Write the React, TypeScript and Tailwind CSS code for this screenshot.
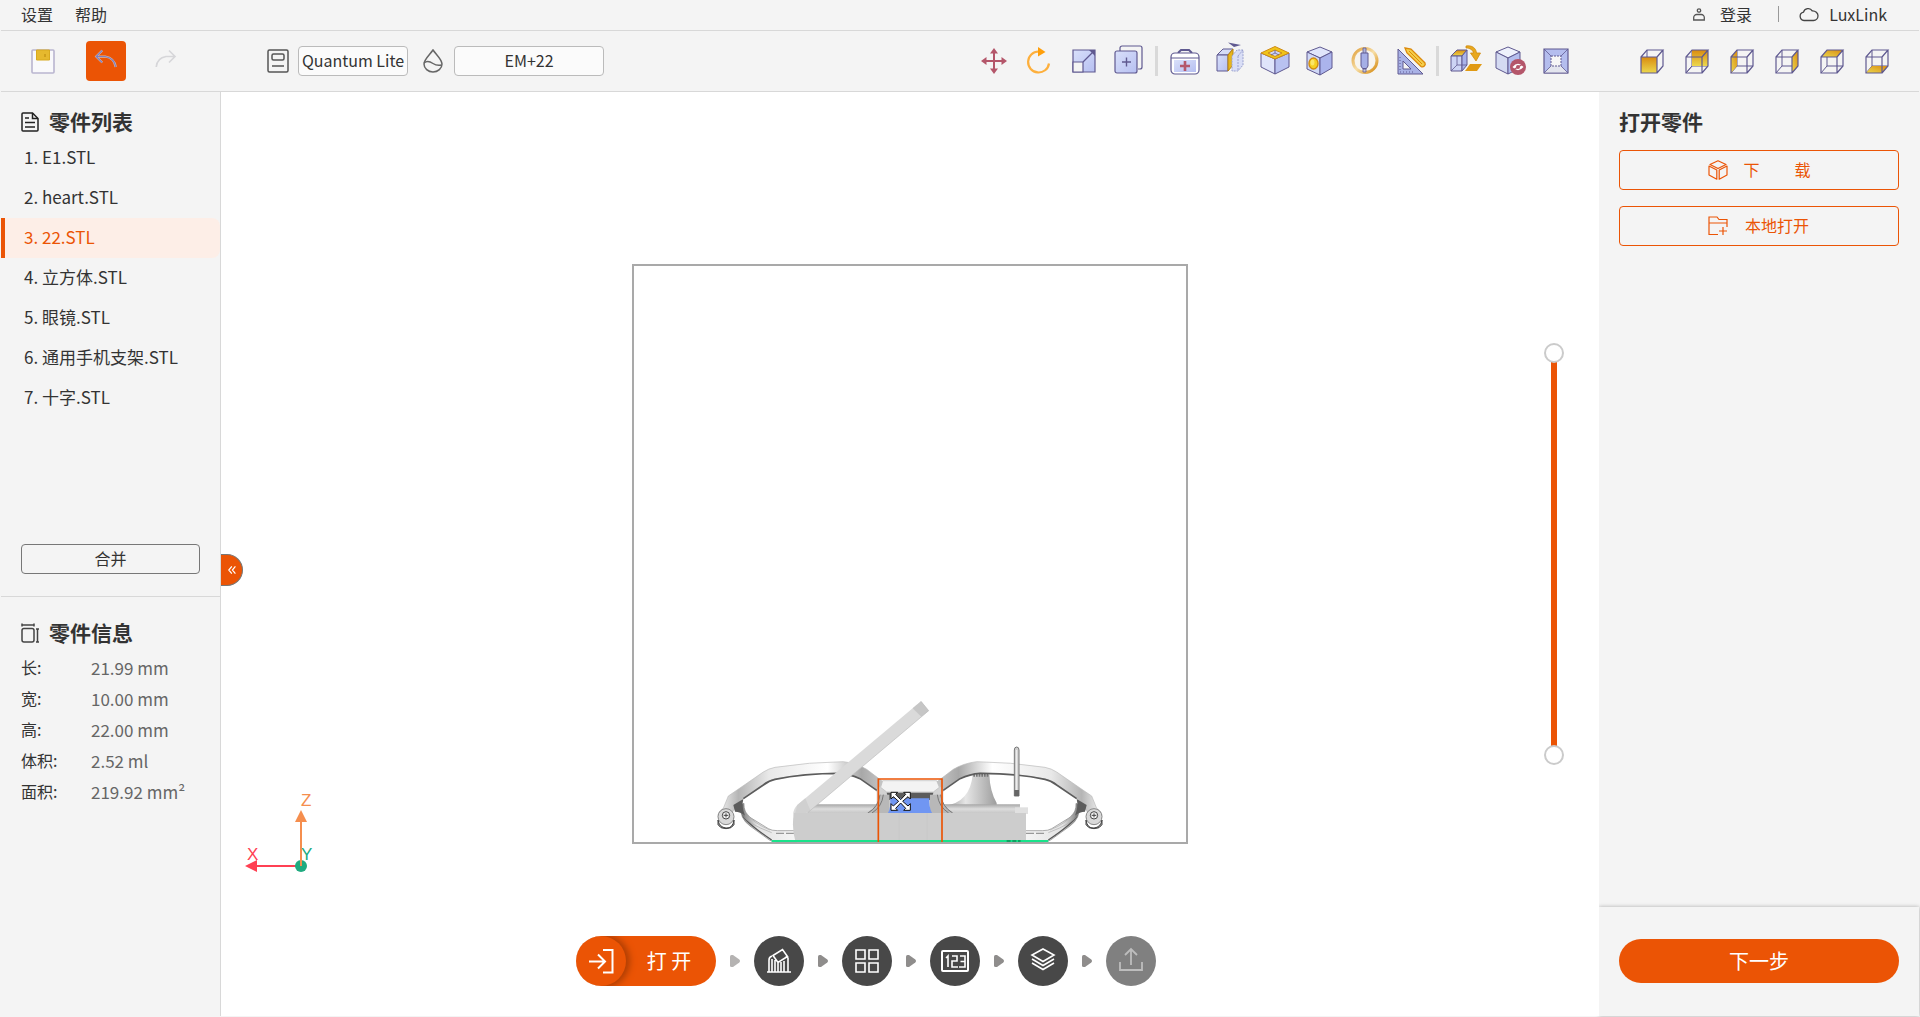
import { useState } from "react";
import type { ReactNode } from "react";

const LINE = "#5f5990";
const FACE = "#b9c2f1";

function Svg({ children, className = "size-8 overflow-visible" }: { children: ReactNode; className?: string }) {
  return (
    <svg viewBox="0 0 32 32" className={className} fill="none" aria-hidden="true">
      {children}
    </svg>
  );
}

function Gradients() {
  return (
    <svg className="absolute size-0" aria-hidden="true">
      <defs>
        <linearGradient id="face" x1="0" y1="0" x2="1" y2="1">
          <stop offset="0" stopColor="#d9e0fa" />
          <stop offset="1" stopColor="#b6bff1" />
        </linearGradient>
        <linearGradient id="gold" x1="0" y1="0" x2="0" y2="1">
          <stop offset="0" stopColor="#d98b10" />
          <stop offset="1" stopColor="#ecd84e" />
        </linearGradient>
        <linearGradient id="goldSide" x1="1" y1="0" x2="0" y2="1">
          <stop offset="0" stopColor="#d98b10" />
          <stop offset="1" stopColor="#ecd84e" />
        </linearGradient>
        <linearGradient id="ring" x1="0" y1="0" x2="1" y2="1">
          <stop offset="0" stopColor="#e0a03c" />
          <stop offset="0.5" stopColor="#f7dfa8" />
          <stop offset="1" stopColor="#d48608" />
        </linearGradient>
      </defs>
    </svg>
  );
}

const MoveIcon = () => (
  <Svg>
    <path d="M7 16h18M16 7v18" stroke="#b4566a" strokeWidth="2" />
    <path d="M16 3l4 5.500h-8zM16 29l4-5.500h-8zM3 16l5.500-4v8zM29 16l-5.500-4v8z" fill="#b4566a" />
  </Svg>
);

const RotateIcon = () => (
  <Svg>
    <path d="M15.500 6.500A10.500 10.500 0 1 0 26 18.500" stroke="#fdaf3c" strokeWidth="2.200" />
    <path d="M15 2l7.500 5-7.500 4.500z" fill="#ff9f0a" />
  </Svg>
);

const ScaleIcon = () => (
  <Svg>
    <path d="M5 5h22v22H5z" fill="url(#face)" stroke={LINE} strokeWidth="1.200" />
    <path d="M5 17h10v10H5z" fill="#f4f4f4" stroke={LINE} strokeWidth="1.200" />
    <path d="M15 17L26 6" stroke={LINE} strokeWidth="1.200" />
    <path d="M21 5h6v6z" fill={LINE} />
  </Svg>
);

const CloneIcon = () => (
  <Svg>
    <path d="M7 6V3a2 2 0 0 1 2-2h18a2 2 0 0 1 2 2v19a2 2 0 0 1-2 2h-2" stroke={LINE} strokeWidth="1.200" />
    <rect x="2" y="6" width="22" height="22" rx="2" fill="url(#face)" stroke={LINE} strokeWidth="1.200" />
    <path d="M9 17h9M13.500 12.500v9" stroke={LINE} strokeWidth="1.400" />
  </Svg>
);

const RepairIcon = () => (
  <Svg>
    <path d="M9 8l3-3h8l3 3" stroke={LINE} strokeWidth="2" />
    <rect x="2" y="8" width="28" height="21" rx="4" fill="#fff" stroke={LINE} strokeWidth="1.200" />
    <path d="M5 15h22v12H5z" fill="url(#face)" />
    <path d="M2 13h28" stroke={LINE} />
    <path d="M16 16v10M11 21h10" stroke="#b4566a" strokeWidth="2.600" />
  </Svg>
);

const CutIcon = () => (
  <Svg>
    <path d="M3 10l6-6h10l-5 6z" fill="#d5dcf8" stroke={LINE} />
    <path d="M3 10h11v16H3z" fill="url(#face)" stroke={LINE} />
    <path d="M14 10l5-6v16l-5 6z" fill="#e6b51c" stroke="#b98310" />
    <path d="M18 11l5-6h6v15l-5 6h-6z" fill="#d9def6" stroke="#9aa1cf" strokeDasharray="2 1" />
    <path d="M24 11v15M24 11l5-6" stroke="#9aa1cf" strokeDasharray="2 1" />
    <path d="M14-2.500l13 2.500-7 2z" fill={LINE} />
  </Svg>
);

const HollowIcon = () => (
  <Svg>
    <path d="M2 8l14 6v15L2 22z" fill="#dfe4fa" stroke={LINE} />
    <path d="M30 8l-14 6v15l14-7z" fill={FACE} stroke={LINE} />
    <path d="M16 1.500l14 6.500-14 6L2 8z" fill="#f0c419" stroke="#cf8b14" />
    <path d="M16 5l7 3-7 3.500L9 8z" fill="#cfd5f5" stroke="#cf8b14" />
    <path d="M16 5v3l-4 2M16 8l4 2" stroke={LINE} strokeWidth="0.800" />
  </Svg>
);

const PunchIcon = () => (
  <Svg>
    <path d="M3 7l13-5 12 5-12 6z" fill="#e0e5fb" stroke={LINE} />
    <path d="M3 7l13 6v17L3 24z" fill="#d0d8f6" stroke={LINE} />
    <path d="M28 7l-12 6v17l12-7z" fill="#abb4ec" stroke={LINE} />
    <ellipse cx="9.500" cy="18.500" rx="4.500" ry="5.500" fill="#f6cf22" stroke="#d18c12" strokeWidth="1.400" />
    <ellipse cx="8.500" cy="17.500" rx="2" ry="3" fill="#fbe667" />
  </Svg>
);

const SupportIcon = () => (
  <Svg>
    <circle cx="16" cy="15.500" r="12" stroke="url(#ring)" strokeWidth="3" fill="#f7f5f0" />
    <path d="M14 3h3v6h-3z" fill="#aeb4d8" stroke={LINE} strokeWidth="0.800" />
    <path d="M12 8h7v13l-1.500 2.500h-4L12 21z" fill="#a5afe6" stroke={LINE} />
    <path d="M14 24h3v3h-3z" fill="#c9cddf" stroke={LINE} strokeWidth="0.800" />
  </Svg>
);

const MeasureIcon = () => (
  <Svg>
    <path d="M4 4v25h25z" fill="#a9b2e6" stroke={LINE} />
    <path d="M9 16v8h8z" fill="#f4f4f4" stroke={LINE} />
    <path d="M6 12v15h15" stroke={LINE} strokeDasharray="1 2" />
    <path d="M11 3l6 1 14 14c1 2-1.500 5-4 3.500L13 8z" fill="#f4cf4b" stroke="#dc8a0c" strokeWidth="1.300" />
    <path d="M15 6l13 13" stroke="#dc8a0c" />
  </Svg>
);

const LayFlatIcon = () => (
  <Svg>
    <path d="M1 11l6-6h10l-5 6z" fill="url(#gold)" stroke={LINE} />
    <path d="M1 11h11v15H1z" fill="#cdd4f5" stroke={LINE} />
    <path d="M12 11l5-6v15l-5 6z" fill="#a9b3ea" stroke={LINE} />
    <path d="M7 11v9h10M7 20l-6 6" stroke={LINE} strokeWidth="0.800" />
    <path d="M16 1c6-1 10 2 10.500 7h4L26 16l-5.500-8h3C23 5 20 3 16 3z" fill="#e8a81e" stroke="#d08a0c" strokeWidth="0.800" />
    <path d="M20 19h12l-5 7H15z" fill="#e09a14" />
  </Svg>
);

const HideIcon = () => (
  <Svg>
    <path d="M1 7l12-5 12 5-12 6z" fill="#eef1fc" stroke={LINE} />
    <path d="M1 7l12 6v16L1 23z" fill="#d4daf2" stroke={LINE} />
    <path d="M25 7l-12 6v16l12-6z" fill="#b4bdee" stroke={LINE} />
    <circle cx="23" cy="22" r="8" fill="#b4566a" />
    <path d="M17.500 22q5.500-6.500 11 0q-5.500 6.500-11 0z" fill="#fff" />
    <circle cx="23" cy="22" r="2" fill="#b4566a" />
    <path d="M18 25l10-6" stroke="#b4566a" strokeWidth="1.400" />
  </Svg>
);

const FrameIcon = () => (
  <Svg>
    <path d="M4 4h24v24H4z" fill="#b4bdee" stroke={LINE} strokeWidth="1.200" />
    <path d="M4 28l7-7h10l7 7z" fill="#e3e5ee" />
    <path d="M11 11h10v10H11z" fill="#f6f6f6" stroke={LINE} strokeDasharray="2 1" />
    <path d="M4 4l7 7M28 4l-7 7M4 28l7-7M28 28l-7-7M4 28h24" stroke={LINE} strokeWidth="0.800" />
  </Svg>
);

const UndoIcon = () => (
  <Svg className="size-6">
    <path d="M11 2L3 10l8 8M3 10h12q12 2 14 14" stroke="#d8b9a8" strokeWidth="3" />
    <path d="M11 2L3 10l8 8M3 10h12q12 2 14 14" stroke="#7f7fc0" strokeWidth="1.600" />
  </Svg>
);

const RedoIcon = () => (
  <Svg className="size-6">
    <path d="M20 2l8 8-8 8M28 10H16Q4 12 3 24" stroke="#d6d6d9" strokeWidth="2.200" />
  </Svg>
);

const SaveIcon = () => (
  <Svg>
    <rect x="5" y="5" width="22" height="23" rx="1" fill="#f9f9fb" stroke="#b9b5cf" strokeWidth="1.600" />
    <path d="M9.500 5h13v10h-13z" fill="#e6b92e" stroke="#d8a91e" />
    <path d="M18 9v3" stroke="#b9860b" />
  </Svg>
);

const cubeFaces: Record<string, { name: string; d: string }> = {
  front: { name: "前视图", d: "M5 12h16v16H5z" },
  back: { name: "后视图", d: "M11 5h16v16H11z" },
  left: { name: "左视图", d: "M5 12l6-7v16l-6 7z" },
  right: { name: "右视图", d: "M21 12l6-7v16l-6 7z" },
  top: { name: "俯视图", d: "M5 12l6-7h16l-6 7z" },
  bottom: { name: "仰视图", d: "M5 28l6-7h16l-6 7z" },
};

function CubeIcon({ face }: { face: string }) {
  return (
    <Svg>
      {face !== "front" && <path d="M11 5v16h16M11 21l-6 7" stroke={LINE} />}
      {face === "front" && <path d="M11 5v7" stroke={LINE} />}
      <path d={cubeFaces[face].d} fill={face === "front" || face === "back" ? "url(#gold)" : "url(#goldSide)"} />
      {face === "back" && <path d="M5 28l6-7" stroke={LINE} />}
      <path d="M5 12h16v16H5zM5 12l6-7h16l-6 7M27 5v16l-6 7" stroke={LINE} strokeWidth="1.200" />
    </Svg>
  );
}

function ToolButton({ name, children }: { name: string; children: ReactNode }) {
  return (
    <button type="button" aria-label={name} className="flex h-10 w-[45px] items-center justify-center">
      {children}
    </button>
  );
}

const Divider = () => <span className="mx-1 h-[30px] w-[3px] bg-[#d9d9d9]" />;

function MenuBar() {
  return (
    <header className="flex h-[31px] items-center justify-between border-b border-[#d8d8d8] px-5 pb-0.5">
      <nav className="flex gap-[22px]">
        <button type="button">设置</button>
        <button type="button">帮助</button>
      </nav>
      <div className="flex items-center pr-3">
        <button type="button" className="flex items-center gap-[15px]">
          <svg viewBox="0 0 12 13" className="h-[13px] w-3" fill="none" stroke="#555" strokeWidth="1.300" aria-hidden="true">
            <circle cx="6" cy="2.500" r="1.700" />
            <path d="M.700 12V9.500a3 3 0 0 1 3-3h4.600a3 3 0 0 1 3 3V12z" />
          </svg>
          登录
        </button>
        <span className="mr-5 ml-[26px] h-4 w-px bg-[#999]" />
        <button type="button" className="flex items-center gap-2.5">
          <svg viewBox="0 0 20 15" className="h-[15px] w-5" fill="none" stroke="#444" strokeWidth="1.300" aria-hidden="true">
            <path d="M5 13.500a4.200 4.200 0 0 1-.5-8.300C5.500 1.500 11 .0 13.200 3.800c3.300-.2 5.800 2.200 5.800 5 0 2.600-2 4.700-4.500 4.700z" />
          </svg>
          LuxLink
        </button>
      </div>
    </header>
  );
}

function Toolbar() {
  return (
    <div className="flex h-[61px] items-center justify-between border-b border-[#d8d8d8] pr-5 pl-[26px]">
      <div className="flex items-center">
        <button type="button" aria-label="保存"><SaveIcon /></button>
        <button type="button" aria-label="撤销" className="ml-[27px] flex size-10 items-center justify-center rounded bg-[#eb5405]">
          <UndoIcon />
        </button>
        <button type="button" aria-label="重做" className="ml-7 flex size-6 items-center justify-center"><RedoIcon /></button>
        <div className="ml-[89px] flex items-center">
          <svg viewBox="0 0 22 24" className="h-6 w-[22px]" fill="none" stroke="#555" strokeWidth="1.500" aria-hidden="true">
            <rect x="1" y="1" width="20" height="22" rx="1.500" />
            <rect x="5" y="5" width="12" height="6" rx="1.500" />
            <path d="M5 17h12" />
          </svg>
          <select aria-label="打印机" className="ml-[9px] h-[30px] w-[110px] appearance-none rounded border border-[#bbb] bg-[#fbfbfb] pb-0.5 text-center text-base">
            <option>Quantum Lite</option>
          </select>
          <svg viewBox="0 0 20 24" className="ml-[15px] h-6 w-5" fill="none" stroke="#666" strokeWidth="1.500" aria-hidden="true">
            <path d="M10 1C6.500 6 1 10.500 1 15a9 8 0 0 0 18 0C19 10.500 13.500 6 10 1z" />
            <path d="M1 14c3-2.500 6-1.500 9 .5s6 2 8.500 1.500" />
          </svg>
          <select aria-label="材料" className="ml-[11px] h-[30px] w-[150px] appearance-none rounded border border-[#bbb] bg-[#fbfbfb] pb-0.5 text-center text-base">
            <option>EM+22</option>
          </select>
        </div>
      </div>
      <div className="flex items-center">
        <ToolButton name="移动"><MoveIcon /></ToolButton>
        <ToolButton name="旋转"><RotateIcon /></ToolButton>
        <ToolButton name="缩放"><ScaleIcon /></ToolButton>
        <ToolButton name="克隆"><CloneIcon /></ToolButton>
        <Divider />
        <ToolButton name="修复"><RepairIcon /></ToolButton>
        <ToolButton name="切割"><CutIcon /></ToolButton>
        <ToolButton name="抽壳"><HollowIcon /></ToolButton>
        <ToolButton name="打孔"><PunchIcon /></ToolButton>
        <ToolButton name="支撑"><SupportIcon /></ToolButton>
        <ToolButton name="测量"><MeasureIcon /></ToolButton>
        <Divider />
        <ToolButton name="放平"><LayFlatIcon /></ToolButton>
        <ToolButton name="隐藏"><HideIcon /></ToolButton>
        <ToolButton name="视角"><FrameIcon /></ToolButton>
        <div className="ml-[51px] flex">
          {Object.keys(cubeFaces).map((face) => (
            <ToolButton key={face} name={cubeFaces[face].name}><CubeIcon face={face} /></ToolButton>
          ))}
        </div>
      </div>
    </div>
  );
}

const parts = ["E1.STL", "heart.STL", "22.STL", "立方体.STL", "眼镜.STL", "通用手机支架.STL", "十字.STL"];

const info: [string, ReactNode][] = [
  ["长:", "21.99 mm"],
  ["宽:", "10.00 mm"],
  ["高:", "22.00 mm"],
  ["体积:", "2.52 ml"],
  ["面积:", "219.92 mm²"],
];

function PartsPanel() {
  const [selected, setSelected] = useState(2);
  return (
    <aside className="flex w-[220px] shrink-0 flex-col border-r border-[#d8d8d8] bg-[#f4f4f4]">
      <h2 className="flex h-[46px] items-center gap-2.5 px-5 pt-3.5 text-[21px] font-bold">
        <svg viewBox="0 0 18 20" className="h-5 w-[18px]" fill="none" stroke="#222" strokeWidth="1.500" aria-hidden="true">
          <path d="M2 1h9.500L17 6.500V18a1 1 0 0 1-1 1H2a1 1 0 0 1-1-1V2a1 1 0 0 1 1-1z" />
          <path d="M11.500 1v5.500H17M4 6h4M4 10.500h10M4 15h10" />
        </svg>
        零件列表
      </h2>
      <ol className="h-[406px] text-[17px]">
        {parts.map((part, i) => (
          <li key={part}>
            <button
              type="button"
              onClick={() => setSelected(i)}
              className={
                i === selected
                  ? "flex h-10 w-full items-center rounded-r-lg border-l-4 border-[#eb5405] bg-[#fdeee7] pb-0.5 pl-[19px] text-[#eb5405]"
                  : "flex h-10 w-full items-center pb-0.5 pl-[23px]"
              }
            >
              {i + 1}. {part}
            </button>
          </li>
        ))}
      </ol>
      <button type="button" className="mx-5 h-[30px] rounded border border-[#777] pb-0.5 leading-none">合并</button>
      <section className="mt-[22px] border-t border-[#d8d8d8]">
        <h2 className="flex h-14 items-center gap-2.5 px-5 pt-4 text-[21px] font-bold">
          <svg viewBox="0 0 18 20" className="h-5 w-[18px]" fill="none" stroke="#444" strokeWidth="1.500" aria-hidden="true">
            <rect x="1" y="5.500" width="12" height="13.500" rx="2" />
            <path d="M1 2h12M1 .5v3M13 .5v3M16.500 6v13M15 6h3M15 19h3" />
          </svg>
          零件信息
        </h2>
        <dl className="-mt-px grid grid-cols-[70px_1fr] px-5 leading-[31px]">
          {info.map(([label, value]) => (
            <div key={label} className="contents">
              <dt>{label}</dt>
              <dd className="text-[17px] text-[#666]">{value}</dd>
            </div>
          ))}
        </dl>
      </section>
    </aside>
  );
}

function Eyewear() {
  return (
    <>
      <path d="M122 345Q118 385 150 408L208 450Q215 455 230 455H290V422H232Q215 422 205 416L150 382Q130 365 132 340z" fill="url(#metalEnd)" stroke="#888" strokeWidth="2" />
      <path d="M128 375Q140 400 215 450" stroke="#555" strokeWidth="4" fill="none" />
      <path d="M128 375Q140 400 215 428M140 370Q160 400 210 420" stroke="#aaa" strokeWidth="2" fill="none" />
      <path d="M228 430h55" stroke="#999" strokeWidth="4" strokeDasharray="24 6" />
      <path d="M85 318L190 246Q205 236 225 232Q330 216 430 215Q470 220 500 238L550 276L560 305L535 305L480 265Q450 252 420 249Q310 250 225 267Q205 272 190 284L130 325Q112 345 100 362Q90 385 65 398L55 380Q52 365 70 355Q78 335 85 318z" fill="url(#metal)" stroke="#b9b9b9" strokeWidth="2" />
      <path d="M540 308L480 266Q450 252 420 250Q310 250 225 268Q205 272 190 285L130 326" fill="none" stroke="#5c5c5c" strokeWidth="5" />
      <path d="M100 345l30-18q-6 22 5 50q-14-12-30-12z" fill="#5c5c5c" />
      <circle cx="78" cy="380" r="24" fill="#d9d9d9" stroke="#888" strokeWidth="3" />
      <path d="M54 390q4 22 24 24t24-24v14q-6 12-24 12t-24-12z" fill="#999" stroke="#444" strokeWidth="3" />
      <circle cx="78" cy="376" r="11" fill="#f3f3f3" stroke="#444" strokeWidth="3" />
      <path d="M71 376h14M78 370v12" stroke="#444" strokeWidth="3" />
    </>
  );
}

function Scene() {
  return (
    <svg viewBox="0 0 1260 495" className="absolute top-[424px] left-[66px] h-[165px] w-[420px]" role="img" aria-label="模型">
      <defs>
        <linearGradient id="metal" x1="0" x2="1">
          <stop offset="0" stopColor="#f5f5f5" />
          <stop offset="0.120" stopColor="#b5b5b5" />
          <stop offset="0.300" stopColor="#e8e8e8" />
          <stop offset="0.650" stopColor="#fff" />
          <stop offset="0.850" stopColor="#a8a8a8" />
          <stop offset="1" stopColor="#ccc" />
        </linearGradient>
        <linearGradient id="metalEnd" x1="0" x2="1">
          <stop offset="0" stopColor="#777" />
          <stop offset="0.300" stopColor="#e3e3e3" />
          <stop offset="1" stopColor="#f6f6f6" />
        </linearGradient>
        <linearGradient id="bar" x1="0" y1="0" x2="0" y2="1">
          <stop offset="0" stopColor="#a8a8a8" />
          <stop offset="0.500" stopColor="#ddd" />
          <stop offset="1" stopColor="#c4c4c4" />
        </linearGradient>
        <linearGradient id="horn" x1="0" x2="1">
          <stop offset="0" stopColor="#999" />
          <stop offset="0.400" stopColor="#e6e6e6" />
          <stop offset="1" stopColor="#9d9d9d" />
        </linearGradient>
      </defs>
      <path d="M818 254h50q2 50 22 85v8H735q75-10 83-93z" fill="url(#horn)" />
      <path d="M820 256h46" stroke="#777" strokeWidth="8" strokeDasharray="5 3" />
      <Eyewear />
      <g transform="matrix(-1 0 0 1 1260 0)">
        <Eyewear />
      </g>
      <path d="M340 343h620v28H320z" fill="url(#bar)" />
      <path d="M530 370V300l20-22h160l20 22v70z" fill="#d2d2d2" />
      <path d="M548 272h162l8 20-18 14H560l-18-14z" fill="#f3f3f3" stroke="#bbb" strokeWidth="2" />
      <path d="M560 308h140l-6 22H566z" fill="#5c5c5c" />
      <path d="M540 314h28v55h-68q36-20 40-55zM722 314h-32v55h70q-34-20-38-55z" fill="#b8b8b8" />
      <path d="M540 314q-4 36-36 55M550 314q-4 36-34 55M722 314q4 36 36 55M712 314q4 36 34 55" stroke="#777" strokeWidth="3" fill="none" />
      <path d="M564 369q10-20 6-44h118q-2 26 8 44z" fill="#7096f2" />
      <path d="M663 34L686 62L322 369L285 392Q272 365 292 345z" fill="#dadada" />
      <path d="M663 34l23 28-22 18-26-25z" fill="#c6c6c6" />
      <path d="M292 345l24-20 16 38-50 20z" fill="#d0d0d0" />
      <path d="M663 34L686 62L322 369" stroke="#bcbcbc" strokeWidth="2" fill="none" />
      <path d="M943 318V180q0-9 7-9t7 9v138z" fill="#cfcfcf" stroke="#777" strokeWidth="3" />
      <path d="M950 180v120" stroke="#f2f2f2" strokeWidth="3" />
      <path d="M943 300h14v18h-14z" fill="#666" />
      <path d="M945 352h39v20h-39z" fill="#e0e0e0" />
      <path d="M282 369H978v84H286q-12-42-4-84z" fill="#cdcdcd" />
      <path d="M598 369v84M682 369v84" stroke="#c9c9c9" strokeWidth="2" />
      <path d="M215 453H1045" stroke="#19e28a" strokeWidth="6" />
      <path d="M920 453h42" stroke="#0d8d55" strokeWidth="4" strokeDasharray="12 5" />
      <path d="M535 456V267H726V456" fill="none" stroke="#eb5405" strokeWidth="5" />
      <path
        d="M573 307h20l-6 6 15 16 15-16-6-6h20v20l-7-7-16 14 16 14 7-7v20h-20l6-6-15-16-15 16 6 6h-20v-20l7 7 16-14-16-14-7 7z"
        fill="#fff"
        stroke="#111"
        strokeWidth="3"
      />
    </svg>
  );
}

function LayerSlider() {
  const thumb =
    "pointer-events-none absolute inset-0 m-0 h-full w-5 appearance-none bg-transparent [writing-mode:vertical-lr] [direction:rtl] [&::-webkit-slider-thumb]:pointer-events-auto [&::-webkit-slider-thumb]:size-5 [&::-webkit-slider-thumb]:appearance-none [&::-webkit-slider-thumb]:rounded-full [&::-webkit-slider-thumb]:border-2 [&::-webkit-slider-thumb]:border-[#cbcbcb] [&::-webkit-slider-thumb]:bg-white";
  return (
    <div className="absolute top-1/2 right-[35px] flex h-[422px] w-5 -translate-y-1/2 justify-center py-2.5">
      <span className="w-1.5 bg-[#eb5405]" />
      <input type="range" aria-label="上限" defaultValue={100} className={thumb} />
      <input type="range" aria-label="下限" defaultValue={0} className={thumb} />
    </div>
  );
}

function Axes() {
  return (
    <svg viewBox="0 0 80 90" className="absolute bottom-[136px] left-5 h-[90px] w-20" fontFamily="Liberation Sans, sans-serif" fontSize="17" role="img" aria-label="坐标轴">
      <path d="M60 76H14" stroke="#ff4053" strokeWidth="2" />
      <path d="M4 76l12-6v12z" fill="#ff4053" />
      <circle cx="60" cy="76" r="6" fill="#20ab80" />
      <path d="M60 76V28" stroke="#f58e4e" strokeWidth="2" />
      <path d="M60 20l6 12H54z" fill="#f58e4e" />
      <text x="6" y="70" fill="#ff4053">X</text>
      <text x="60" y="70" fill="#20ab80">Y</text>
      <text x="60" y="16" fill="#f58e4e">Z</text>
    </svg>
  );
}

const StepArrow = ({ light }: { light?: boolean }) => (
  <svg viewBox="0 0 10 12" className="h-3 w-2.5" fill={light ? "#b5b3b2" : "#8f8d8c"} aria-hidden="true">
    <path d="M0 1.500Q0 0 1.500 0H3l6.300 4.600q1.400 1.400 0 2.800L3 12H1.500Q0 12 0 10.500z" />
  </svg>
);

const steps: { name: string; icon: ReactNode }[] = [
  { name: "支撑", icon: <path d="M2 25h24M4 25V13q0-3 3-4M7 25V12M10 25V13M13 25V15M16 25V15M19 25V14M23 25V11l-2-2M8 8.500L17.500 2.500l5 7-9.500 6z" /> },
  { name: "布局", icon: <path d="M3 3h9v9H3zM16 3h9v9h-9zM3 16h9v9H3zM16 16h9v9h-9z" /> },
  { name: "编号", icon: <><rect x="1" y="4" width="26" height="20" rx="1" strokeWidth="2" /><path d="M5 11l2-2v11M11 9h5v5h-5v6h6M19 9h5v11h-6M19.500 14.500H24" /></> },
  { name: "切片", icon: <path d="M14 2l11 6-11 6.500L3 8zM3 12l11 6.500L25 12M3 16l11 6.500L25 16" /> },
];

function StepBar() {
  return (
    <div className="absolute inset-x-0 bottom-[30px] flex items-center justify-center gap-3.5 pr-[88px]">
      <button type="button" className="flex h-[50px] w-[140px] items-center overflow-hidden rounded-full bg-[#eb5405] text-xl text-white">
        <span className="flex size-[50px] items-center justify-center rounded-full shadow-[2px_0_6px_2px_#b03f04]">
          <svg viewBox="0 0 26 26" className="size-[26px]" fill="none" stroke="currentColor" strokeWidth="2" aria-hidden="true">
            <path d="M1 13.500h15M10 6.500l7 7-7 7M15 2h9.500v22.500H15" />
          </svg>
        </span>
        <span className="flex-1 pr-1 text-center">打 开</span>
      </button>
      {steps.map((step, i) => (
        <div key={step.name} className="flex items-center gap-3.5">
          <StepArrow light={i === 0} />
          <button type="button" aria-label={step.name} className="flex size-[50px] items-center justify-center rounded-full bg-[#484848] text-white">
            <svg viewBox="0 0 28 28" className="size-7" fill="none" stroke="currentColor" strokeWidth="1.600" aria-hidden="true">{step.icon}</svg>
          </button>
        </div>
      ))}
      <StepArrow />
      <button type="button" disabled aria-label="导出" className="flex size-[50px] items-center justify-center rounded-full bg-[#808080] text-[#bdbdbd]">
        <svg viewBox="0 0 28 28" className="size-7" fill="none" stroke="currentColor" strokeWidth="1.800" aria-hidden="true">
          <path d="M14 18V2M8 8l6-6 6 6M3 15v8h22v-8" />
        </svg>
      </button>
    </div>
  );
}

function Viewport() {
  return (
    <main className="relative flex min-w-0 flex-1 items-center justify-center bg-white">
      <button type="button" aria-label="收起" className="absolute top-1/2 left-0 flex h-8 w-[22px] items-center justify-center rounded-r-full border border-l-0 border-[#777] bg-[#eb5405] text-white">
        <svg viewBox="0 0 8 8" className="size-2" fill="none" stroke="currentColor" strokeWidth="1.200" aria-hidden="true">
          <path d="M3.800.4L.8 4l3 3.600M7.400.4L4.400 4l3 3.600" />
        </svg>
      </button>
      <div className="relative h-[580px] w-[556px] border-2 border-[#a9a9a9]">
        <Scene />
      </div>
      <Axes />
      <LayerSlider />
      <StepBar />
    </main>
  );
}

function OpenPanel() {
  const button = "flex h-10 items-center justify-center gap-4 rounded border border-[#eb5405] leading-none text-[#eb5405]";
  return (
    <aside className="flex w-80 shrink-0 flex-col bg-[#f4f4f4]">
      <div className="flex flex-1 flex-col gap-4 px-5">
        <h2 className="-mb-1 flex h-[46px] items-center pt-3.5 text-[21px] font-bold">打开零件</h2>
        <button type="button" className={button}>
          <svg viewBox="0 0 20 20" className="size-5" fill="none" stroke="currentColor" strokeWidth="1.200" aria-hidden="true">
            <path d="M10 .8l8 3.700-8 4-8-4zM1 6l7.800 4v9.200L1 15zM19 6l-7.800 4v9.200L19 15z" strokeLinejoin="round" />
          </svg>
          <span className="flex w-[67px] justify-between pb-0.5"><span>下</span><span>载</span></span>
        </button>
        <button type="button" className={button}>
          <svg viewBox="0 0 20 20" className="size-5" fill="none" stroke="currentColor" strokeWidth="1.200" aria-hidden="true">
            <path d="M10 18.500H1V1h8l2 2.500h8V11M1 7h18M11 15h8M15 11v8" />
          </svg>
          <span className="w-[67px] pb-0.5">本地打开</span>
        </button>
      </div>
      <div className="px-5 pt-8 pb-[33px] shadow-[0_0_4px_#0000004d]">
        <button type="button" className="h-11 w-full rounded-full bg-[#eb5405] text-xl leading-none text-white">下一步</button>
      </div>
    </aside>
  );
}

export default function App() {
  return (
    <div className="flex min-h-screen flex-col bg-[#f4f4f4] px-px pb-px font-['Noto_Sans_CJK_SC',sans-serif] text-base text-[#333]">
      <Gradients />
      <MenuBar />
      <Toolbar />
      <div className="flex flex-1">
        <PartsPanel />
        <Viewport />
        <OpenPanel />
      </div>
    </div>
  );
}
